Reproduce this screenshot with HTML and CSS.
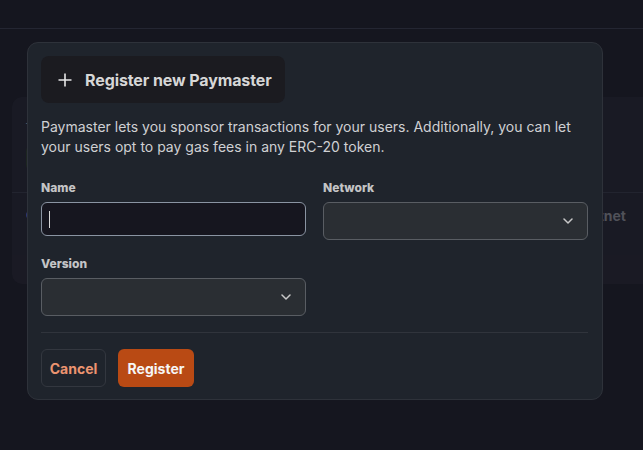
FILE: index.html
```html
<!DOCTYPE html>
<html lang="en">
<head>
<meta charset="utf-8">
<title>Register new Paymaster</title>
<link rel="stylesheet" href="styles.css">
</head>
<body>
<div class="page">
  <header class="topbar"></header>
  <main class="main">
    <section class="bg-card">
      <div class="bg-row bg-row-top">
        <span class="bg-glyph">f</span>
        <span class="bg-btn"></span>
      </div>
      <div class="bg-row bg-row-bottom">
        <span class="bg-dot"></span>
        <span class="bg-net">Testnet</span>
      </div>
    </section>
  </main>

  <div class="modal">
    <div class="modal-title">
      <svg class="plus" width="14" height="14" viewBox="0 0 14 14" aria-hidden="true">
        <path d="M7 0.5V13.5M0.5 7H13.5" stroke="#e6e6e6" stroke-width="1.6" fill="none"/>
      </svg>
      <span>Register new Paymaster</span>
    </div>
    <p class="desc">Paymaster lets you sponsor transactions for your users. Additionally, you can let your users opt to pay gas fees in any ERC-20 token.</p>

    <div class="form-grid">
      <div class="field">
        <label class="label">Name</label>
        <div class="input"><span class="caret"></span></div>
      </div>
      <div class="field">
        <label class="label">Network</label>
        <div class="select">
          <svg class="chev" width="10" height="6" viewBox="0 0 10 6" aria-hidden="true"><path d="M1 1L5 5L9 1" stroke="#c8c8c8" stroke-width="1.5" fill="none" stroke-linecap="round" stroke-linejoin="round"/></svg>
        </div>
      </div>
      <div class="field">
        <label class="label">Version</label>
        <div class="select">
          <svg class="chev" width="10" height="6" viewBox="0 0 10 6" aria-hidden="true"><path d="M1 1L5 5L9 1" stroke="#c8c8c8" stroke-width="1.5" fill="none" stroke-linecap="round" stroke-linejoin="round"/></svg>
        </div>
      </div>
    </div>

    <div class="divider"></div>

    <div class="actions">
      <button class="btn btn-cancel">Cancel</button>
      <button class="btn btn-primary">Register</button>
    </div>
  </div>
</div>
</body>
</html>
```

FILE: styles.css
```css
* { box-sizing: border-box; }
html, body {
  margin: 0;
  padding: 0;
  background: #15161f;
  font-family: Inter, "Liberation Sans", sans-serif;
}
.page {
  position: relative;
  width: 643px;
  height: 450px;
  overflow: hidden;
}
.topbar {
  height: 29px;
  border-bottom: 1px solid #242632;
  background: #15161f;
}
.main {
  padding: 68px 0 0 12px;
}
.bg-card {
  width: 660px;
  height: 187px;
  background: #1b1c26;
  border-radius: 10px;
  opacity: 0.8;
}
.bg-row {
  display: flex;
  align-items: center;
  padding: 0 14px;
}
.bg-row-top {
  height: 96px;
  flex-direction: column;
  align-items: flex-start;
  padding-top: 20px;
  gap: 12px;
  border-bottom: 1px solid #262833;
}
.bg-glyph { color: #6a6b72; font-size: 14px; }
.bg-btn { width: 40px; height: 24px; background: #1f2a22; border-radius: 5px; }
.bg-row-bottom { height: 44px; justify-content: space-between; padding-right: 46px; }
.bg-dot { width: 10px; height: 10px; border-radius: 50%; background: #34408a; }
.bg-net { color: #5f6068; font-size: 14px; font-weight: 700; }

.modal {
  position: absolute;
  left: 27px;
  top: 42px;
  width: 576px;
  height: 358px;
  background: #1f242c;
  border: 1px solid #2e323a;
  border-radius: 11px;
  padding: 13px 14px 13px 13px;
}
.modal-title {
  display: inline-flex;
  align-items: center;
  gap: 13px;
  height: 47px;
  padding: 0 13px 0 17px;
  background: #1b1b20;
  border-radius: 8px;
  color: #d6d6d6;
  font-size: 16px;
  font-weight: 700;
  letter-spacing: -0.1px;
}
.plus { flex: none; }
.desc {
  margin: 14px 0 0;
  font-size: 14px;
  line-height: 20px;
  color: #cfd0d3;
  font-weight: 400;
}
.form-grid {
  display: grid;
  grid-template-columns: 265px 265px;
  column-gap: 17px;
  row-gap: 16px;
  margin-top: 23px;
}
.field { display: flex; flex-direction: column; }
.label {
  font-size: 12px;
  line-height: 16px;
  font-weight: 800;
  color: #c4c4c6;
  margin-bottom: 6px;
}
.input {
  height: 34px;
  background: #16161f;
  border: 1px solid #8a94a2;
  border-radius: 6px;
  display: flex;
  align-items: center;
  padding-left: 7px;
}
.caret { width: 1px; height: 17px; background: #d8d8d8; }
.select {
  height: 38px;
  background: #2a2e33;
  border: 1px solid #595d63;
  border-radius: 6px;
  display: flex;
  align-items: center;
  justify-content: flex-end;
  padding-right: 14px;
}
.chev { display: block; }
.divider {
  height: 1px;
  background: #30343c;
  margin-top: 16px;
}
.actions {
  display: flex;
  gap: 12px;
  margin-top: 16px;
}
.btn {
  height: 38px;
  border-radius: 6px;
  font-family: inherit;
  font-size: 14px;
  font-weight: 700;
  cursor: pointer;
}
.btn-cancel {
  width: 65px;
  background: transparent;
  border: 1px solid #33373f;
  color: #ec9470;
}
.btn-primary {
  width: 76px;
  background: #b94a14;
  border: none;
  color: #f6f6f6;
}
```
